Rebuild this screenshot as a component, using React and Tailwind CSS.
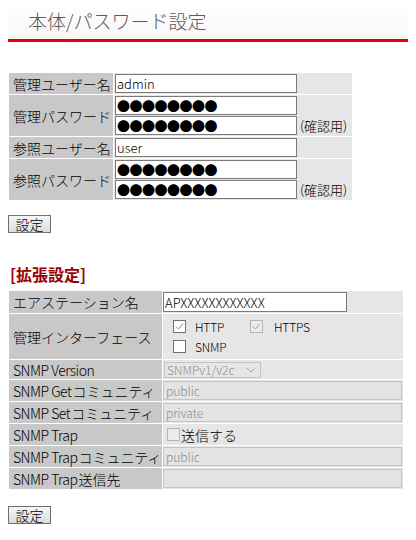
import React from 'react';

// 本体/パスワード設定 画面
const dots = '●●●●●●●●';

function Label({ children }) {
  return (
    <div className="bg-[#c8c8c8] flex items-center pl-[4px] text-[14px] leading-[16px] text-black whitespace-nowrap">
      <span>{children}</span>
    </div>
  );
}

// 半角部分 (細め・詰め)
function En({ children }) {
  return <span className="tracking-[-0.5px] pr-px">{children}</span>;
}

function TextBox({ value, w = 'w-[182px]', big = false }) {
  return (
    <input
      readOnly
      value={value}
      className={
        'block flex-none h-[19px] bg-white border border-[#7a7a7a] px-[1px] text-black outline-none ' +
        w +
        (big ? ' text-[13px] leading-[15px] tracking-[-0.5px]' : ' text-[13px] leading-[15px]')
      }
    />
  );
}

function GrayBox({ value, w = 'w-[239px]', h = 'h-[19px]' }) {
  return (
    <div className={'flex items-center bg-[#e4e4e4] border border-[#c4c4c4] pl-[2px] text-[12px] leading-[14px] text-[#8c8c8c] ' + w + ' ' + h}>
      {value}
    </div>
  );
}

function Check({ checked, disabled }) {
  return (
    <span
      className={
        'inline-flex flex-none items-center justify-center w-[13px] h-[13px] border ' +
        (disabled ? 'border-[#b5b5b5] bg-[#ececec]' : 'border-[#707070] bg-white')
      }
    >
      {checked && (
        <svg width="9" height="9" viewBox="0 0 9 9">
          <path d="M1 4.5 L3.5 7 L8 1.5" fill="none" stroke={disabled ? '#9a9a9a' : '#7d8898'} strokeWidth="1" />
        </svg>
      )}
    </span>
  );
}

function Button() {
  return (
    <button className="block h-[18px] w-[43px] border border-[#6f6f6f] bg-gradient-to-b from-[#f6f6f6] to-[#dcdcdc] text-[14px] leading-[14px] text-black">
      設定
    </button>
  );
}

function Note() {
  return <span className="ml-[3px] mb-[2px] whitespace-nowrap text-[13px] leading-[15px]">(確認用)</span>;
}

function CbText({ children }) {
  return <span className="text-[12px] tracking-[-0.2px] leading-[13px] text-black">{children}</span>;
}

export default function App() {
  return (
    <div className="min-h-[540px] bg-white px-[8px] pt-[3px] font-['Noto_Sans_CJK_JP','Noto_Sans',sans-serif] font-light text-black">
      {/* === タイトル === */}
      <div className="h-[39px] bg-gradient-to-b from-[#ffffff] to-[#f7f7f7] border-b-[3px] border-[#e8000b] pl-[20px] flex items-center">
        <span className="text-[19px] leading-[24px] text-[#5a5a5a]">本体/パスワード設定</span>
      </div>

      {/* === パスワード === */}
      <div className="mt-[31px] ml-px w-[343px] grid grid-cols-[104px_1fr] gap-px">
        <Label>管理ユーザー名</Label>
        <div className="bg-[#e6e6e6] py-px pl-px">
          <TextBox value="admin" />
        </div>

        <Label>管理パスワード</Label>
        <div className="bg-[#e6e6e6] py-px pl-px flex items-end">
          <div className="flex flex-none flex-col gap-px">
            <TextBox value={dots} big />
            <TextBox value={dots} big />
          </div>
          <Note />
        </div>

        <Label>参照ユーザー名</Label>
        <div className="bg-[#e6e6e6] py-px pl-px">
          <TextBox value="user" />
        </div>

        <Label>参照パスワード</Label>
        <div className="bg-[#e6e6e6] py-px pl-px flex items-end">
          <div className="flex flex-none flex-col gap-px">
            <TextBox value={dots} big />
            <TextBox value={dots} big />
          </div>
          <Note />
        </div>
      </div>

      <div className="mt-[15px]">
        <Button />
      </div>

      {/* === 拡張設定 === */}
      <div className="mt-[31px] pl-[2px] text-[16px] leading-[20px] font-bold text-[#990000]">[拡張設定]</div>

      <div className="mt-[7px] ml-px w-[394px] grid grid-cols-[153px_1fr] gap-px">
        <Label>エアステーション名</Label>
        <div className="bg-[#e6e6e6] h-[22px] flex items-center">
          <input
            readOnly
            value="APXXXXXXXXXXXX"
            className="block h-[20px] w-[184px] bg-white border border-[#7a7a7a] px-[1px] text-[13px] leading-[15px] text-black outline-none"
          />
        </div>

        <Label>管理インターフェース</Label>
        <div className="bg-[#e6e6e6] h-[45px] pl-[10px] pt-[6px] flex flex-col gap-[7px]">
          <div className="flex items-center h-[13px]">
            <div className="w-[77px] flex items-center gap-[9px]">
              <Check checked />
              <CbText>HTTP</CbText>
            </div>
            <div className="flex items-center gap-[11px]">
              <Check checked disabled />
              <CbText>HTTPS</CbText>
            </div>
          </div>
          <div className="flex items-center h-[13px] gap-[9px]">
            <Check />
            <CbText>SNMP</CbText>
          </div>
        </div>

        <Label><En>SNMP Version</En></Label>
        <div className="bg-[#e6e6e6] h-[19px] flex items-center pl-px">
          <div className="h-[16px] w-[97px] flex items-center justify-between border border-[#c4c4c4] pl-[2px] pr-[4px] text-[12px] leading-[14px] text-[#8c8c8c]">
            <span>SNMPv1/v2c</span>
            <svg width="10" height="6" viewBox="0 0 10 6">
              <path d="M1 1 L5 5 L9 1" fill="none" stroke="#a8a8a8" strokeWidth="1" />
            </svg>
          </div>
        </div>

        <Label><En>SNMP Get</En>コミュニティ</Label>
        <div className="bg-[#e6e6e6] h-[21px] flex items-center">
          <GrayBox value="public" />
        </div>

        <Label><En>SNMP Set</En>コミュニティ</Label>
        <div className="bg-[#e6e6e6] h-[21px] flex items-center">
          <GrayBox value="private" />
        </div>

        <Label><En>SNMP Trap</En></Label>
        <div className="bg-[#e6e6e6] h-[21px] flex items-center pl-[4px]">
          <Check disabled />
          <span className="ml-px text-[14px] leading-[16px]">送信する</span>
        </div>

        <Label><En>SNMP Trap</En>コミュニティ</Label>
        <div className="bg-[#e6e6e6] h-[21px] flex items-center">
          <GrayBox value="public" />
        </div>

        <Label><En>SNMP Trap</En>送信先</Label>
        <div className="bg-[#e6e6e6] h-[21px] flex items-center">
          <GrayBox value="" />
        </div>
      </div>

      <div className="mt-[17px]">
        <Button />
      </div>
    </div>
  );
}
